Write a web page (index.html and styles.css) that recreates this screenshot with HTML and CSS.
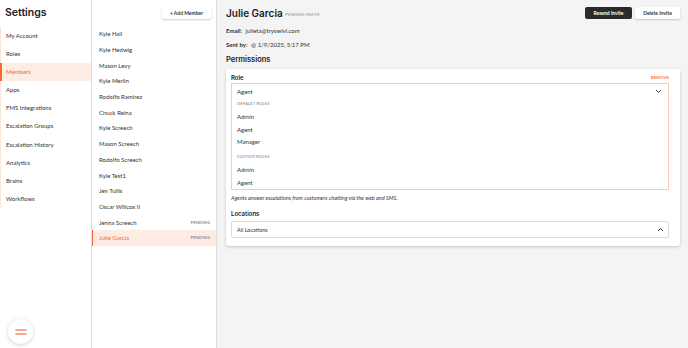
FILE: index.html
```
<!DOCTYPE html>
<html lang="en">
<head>
    <meta charset="UTF-8">
    <meta name="viewport" content="width=device-width, initial-scale=1.0">
    <title>Settings - Members</title>
    <link rel="stylesheet" href="styles.css">
</head>
<body>
    <aside class="sidebar">
        <h1 class="sideTitle">Settings</h1>
        <nav class="sideNav">
            <a class="navItem">My Account</a>
            <a class="navItem">Roles</a>
            <a class="navItem active">Members</a>
            <a class="navItem">Apps</a>
            <a class="navItem">FMS Integrations</a>
            <a class="navItem">Escalation Groups</a>
            <a class="navItem">Escalation History</a>
            <a class="navItem">Analytics</a>
            <a class="navItem">Brains</a>
            <a class="navItem">Workflows</a>
        </nav>
        <button class="menuFab">
            <svg width="12" height="8" viewBox="0 0 12 8"><path d="M1 2h10M1 6h10" stroke="#f58a5f" stroke-width="1.6" stroke-linecap="round"/></svg>
        </button>
    </aside>

    <section class="memberList">
        <div class="listTop">
            <button class="addBtn">+ Add Member</button>
        </div>
        <ul class="members">
            <li class="member">Kyle Hall</li>
            <li class="member">Kyle Hedwig</li>
            <li class="member">Mason Levy</li>
            <li class="member">Kyle Merlin</li>
            <li class="member">Rodolfo Ramirez</li>
            <li class="member">Chuck Reina</li>
            <li class="member">Kyle Screech</li>
            <li class="member">Mason Screech</li>
            <li class="member">Rodolfo Screech</li>
            <li class="member">Kyle Test1</li>
            <li class="member">Jen Tullis</li>
            <li class="member">Oscar Willcox II</li>
            <li class="member">Jenna Screech <span class="pending">PENDING</span></li>
            <li class="member selected">Julie Garcia <span class="pending">PENDING</span></li>
        </ul>
    </section>

    <main class="detail">
        <header class="detailHead">
            <h2 class="detailName">Julie Garcia <span class="inviteTag">PENDING INVITE</span></h2>
            <div class="headBtns">
                <button class="btnDark">Resend Invite</button>
                <button class="btnLight">Delete Invite</button>
            </div>
        </header>
        <p class="meta"><b>Email:</b> julieta@tryswivl.com</p>
        <p class="meta"><b>Sent by:</b> @ 1/9/2025, 5:17 PM</p>
        <h3 class="permTitle">Permissions</h3>

        <div class="card">
            <div class="roleHead">
                <span class="fieldLabel">Role</span>
                <span class="removeLink">REMOVE</span>
            </div>
            <div class="roleSelect">
                <div class="selectValue">
                    <span>Agent</span>
                    <svg width="7" height="5" viewBox="0 0 7 5"><path d="M1 1l2.5 2.5L6 1" fill="none" stroke="#333" stroke-width="0.9"/></svg>
                </div>
                <p class="groupLabel">DEFAULT ROLES</p>
                <p class="option">Admin</p>
                <p class="option">Agent</p>
                <p class="option">Manager</p>
                <p class="groupLabel">CUSTOM ROLES</p>
                <p class="option">Admin</p>
                <p class="option">Agent</p>
            </div>
            <p class="roleDesc">Agents answer escalations from customers chatting via the web and SMS.</p>
            <span class="fieldLabel locLabel">Locations</span>
            <div class="locSelect">
                <span>All Locations</span>
                <svg width="7" height="5" viewBox="0 0 7 5"><path d="M1 4l2.5-2.5L6 4" fill="none" stroke="#333" stroke-width="1"/></svg>
            </div>
        </div>
    </main>
</body>
</html>
```

FILE: styles.css
```
*{
    margin: 0; padding: 0;
    box-sizing: border-box;
}
body{
    width: 688px;
    height: 348px;
    display: flex;
    font-family: "Lato", "Open Sans", sans-serif;
    font-size: 6px;
    color: #333;
    background-color: #fff;
    overflow: hidden;
}
button{
    font-family: inherit;
    cursor: pointer;
}

/* left settings menu */
.sidebar{
    width: 92px;
    flex-shrink: 0;
    position: relative;
    border-right: 1px solid #dedede;
}
.sideTitle{
    font-family: "Inter", sans-serif;
    font-size: 10.5px;
    font-weight: 600;
    color: #222;
    padding: 6px 0 0 5px;
    height: 27px;
}
.sideNav{
    display: flex;
    flex-direction: column;
    border-left: 1px solid #fde3d8;
    padding-bottom: 1px;
}
.navItem{
    height: 18.1px;
    line-height: 18.1px;
    padding-left: 5px;
    color: #333;
}
.navItem.active{
    background-color: #fdece4;
    color: #f26a35;
    border-left: 2px solid #f26a35;
    margin-left: -1px;
    padding-left: 4px;
}
.menuFab{
    position: absolute;
    left: 8px;
    bottom: 4px;
    width: 25px;
    height: 25px;
    border-radius: 50%;
    border: 0;
    background-color: #fff;
    box-shadow: 0 1px 4px rgba(0,0,0,0.18);
    display: flex;
    align-items: center;
    justify-content: center;
}

/* member list */
.memberList{
    width: 125px;
    flex-shrink: 0;
    border-right: 1px solid #dedede;
}
.listTop{
    display: flex;
    justify-content: flex-end;
    padding: 6px 5px 0 0;
    height: 26px;
}
.addBtn{
    width: 49px;
    height: 13px;
    border: 0;
    border-radius: 2px;
    background-color: #fff;
    box-shadow: 0 1px 2px rgba(0,0,0,0.2);
    font-size: 5px;
    font-weight: 700;
    color: #333;
}
.members{
    list-style: none;
}
.member{
    height: 15.7px;
    display: flex;
    align-items: center;
    justify-content: space-between;
    padding: 0 6px 0 7px;
}
.member.selected{
    background-color: #fdece4;
    color: #f26a35;
    border-left: 1px solid #f26a35;
    padding-left: 6px;
}
.pending{
    font-size: 4px;
    font-weight: 700;
    letter-spacing: 0.2px;
    color: #888;
}

/* detail */
.detail{
    flex: 1;
    background-color: #f4f4f4;
    padding: 6px 8px 0 9px;
}
.detailHead{
    display: flex;
    justify-content: space-between;
    align-items: center;
    height: 13px;
}
.detailName{
    font-family: "Inter", sans-serif;
    font-size: 10px;
    font-weight: 600;
    color: #222;
}
.inviteTag{
    font-family: "Lato", sans-serif;
    font-size: 4px;
    font-weight: 400;
    letter-spacing: 0.2px;
    color: #888;
    vertical-align: middle;
}
.headBtns{
    display: flex;
    gap: 3px;
}
.btnDark, .btnLight{
    height: 12px;
    border-radius: 2px;
    font-size: 5px;
    font-weight: 700;
    border: 0;
}
.btnDark{
    width: 47px;
    background-color: #2b2b2b;
    color: #fff;
}
.btnLight{
    width: 45px;
    background-color: #fff;
    color: #333;
    box-shadow: 0 1px 2px rgba(0,0,0,0.2);
}
.meta{
    margin-top: 8px;
    height: 8px;
    line-height: 8px;
}
.meta b{
    font-weight: 700;
    margin-right: 2px;
}
.detail .meta + .meta{
    margin-top: 6px;
}
.permTitle{
    font-family: "Inter", sans-serif;
    font-size: 7.5px;
    font-weight: 600;
    color: #222;
    margin-top: 5px;
    height: 12px;
    line-height: 12px;
}
.card{
    margin-top: 3px;
    background-color: #fff;
    border-radius: 3px;
    box-shadow: 0 1px 3px rgba(0,0,0,0.2);
    padding: 4px 11px 8px 5px;
}
.roleHead{
    display: flex;
    justify-content: space-between;
    align-items: center;
    height: 8px;
    margin-bottom: 2px;
}
.fieldLabel{
    font-family: "Inter", sans-serif;
    font-size: 6px;
    font-weight: 600;
    color: #222;
}
.removeLink{
    font-size: 4px;
    font-weight: 700;
    color: #f26a35;
    letter-spacing: 0.2px;
}
.roleSelect{
    border: 1px solid #fcc8b4;
    padding: 0 4px 0 5px;
}
.selectValue{
    display: flex;
    justify-content: space-between;
    align-items: center;
    height: 14px;
    padding-right: 2px;
}
.groupLabel{
    font-size: 4px;
    color: #777;
    letter-spacing: 0.2px;
    height: 13px;
    line-height: 12px;
}
.option{
    height: 12.7px;
    line-height: 12.7px;
}
.option + .groupLabel{
    margin-top: 2px;
}
.roleDesc{
    font-style: italic;
    font-size: 5.5px;
    line-height: 7px;
    margin-top: 5px;
}
.locLabel{
    display: block;
    margin-top: 8px;
}
.locSelect{
    margin-top: 4px;
    height: 17px;
    border: 1px solid #dcdcdc;
    border-radius: 2px;
    display: flex;
    justify-content: space-between;
    align-items: center;
    padding: 0 4px 0 5px;
    font-size: 5.5px;
}
```
